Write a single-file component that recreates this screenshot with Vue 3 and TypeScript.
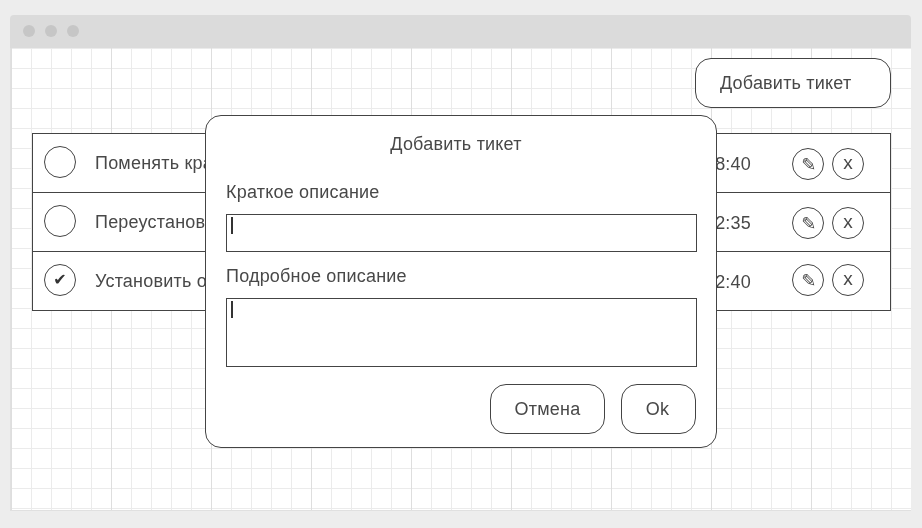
<script setup lang="ts">
interface Ticket {
  id: number
  title: string
  time: string
  done: boolean
}

const tickets: Ticket[] = [
  { id: 1, title: 'Поменять краску в принтере', time: '12.10.2017 18:40', done: false },
  { id: 2, title: 'Переустановить систему', time: '11.10.2017 12:35', done: false },
  { id: 3, title: 'Установить ос', time: '10.10.2017 12:40', done: true },
]
</script>

<template>
  <div class="page">
    <div class="window">
      <div class="titlebar">
        <span class="dot"></span>
        <span class="dot"></span>
        <span class="dot"></span>
      </div>
      <div class="canvas">
        <div class="toolbar">
          <button class="btn add">Добавить тикет</button>
        </div>
        <div class="table">
          <div v-for="t in tickets" :key="t.id" class="row">
            <span class="circle check">{{ t.done ? '✔' : '' }}</span>
            <span class="title">{{ t.title }}</span>
            <span class="time">{{ t.time }}</span>
            <span class="circle action pencil">✎</span>
            <span class="circle action cross">x</span>
          </div>
        </div>
        <div class="modal">
          <div class="modal-title">Добавить тикет</div>
          <div class="label first">Краткое описание</div>
          <div class="field short"><span class="caret"></span></div>
          <div class="label second">Подробное описание</div>
          <div class="field long"><span class="caret"></span></div>
          <div class="actions">
            <button class="btn cancel">Отмена</button>
            <button class="btn ok">Ok</button>
          </div>
        </div>
      </div>
    </div>
  </div>
</template>

<style>
html,
body {
  margin: 0;
  background: #ededed;
}
</style>

<style scoped>
.page {
  width: 922px;
  height: 528px;
  box-sizing: border-box;
  padding: 15px 11px 17px 10px;
  background: #ededed;
  font-family: "Liberation Sans", Arial, sans-serif;
  font-size: 18px;
  letter-spacing: 0.2px;
  color: #484848;
  overflow: hidden;
}
.window {
  height: 100%;
  display: flex;
  flex-direction: column;
  border-radius: 4px 4px 0 0;
  overflow: hidden;
}
.titlebar {
  box-sizing: border-box;
  height: 33px;
  flex: none;
  display: flex;
  align-items: center;
  gap: 10px;
  padding: 0 0 1px 13px;
  background: #dbdbdb;
}
.dot {
  width: 12px;
  height: 12px;
  border-radius: 50%;
  background: #c6c6c6;
}
.canvas {
  position: relative;
  flex: 1;
  box-sizing: border-box;
  padding: 10px 20px 0 21px;
  border-left: 1px solid #e0e0e0;
  border-bottom: 1px solid #e0e0e0;
  background-color: #fff;
  background-image:
    linear-gradient(to right, #dedede 1px, transparent 1px),
    linear-gradient(to right, #ebebeb 1px, transparent 1px),
    linear-gradient(to bottom, #ebebeb 1px, transparent 1px);
  background-size: 100px 100%, 20px 20px, 20px 20px;
  background-position: 1px 0, 1px 0, 0 0;
  background-origin: border-box;
  filter: grayscale(1);
}
.toolbar {
  display: flex;
  justify-content: flex-end;
}
.btn {
  box-sizing: border-box;
  height: 50px;
  border: 1px solid #444;
  border-radius: 16px;
  background: #fff;
  font: inherit;
  letter-spacing: inherit;
  color: inherit;
  padding: 0;
}
.add {
  width: 196px;
  text-align: left;
  padding-left: 24px;
}
.table {
  margin-top: 25px;
  border: 1px solid #444;
  background: #fff;
}
.row {
  box-sizing: border-box;
  height: 59px;
  display: flex;
  align-items: center;
  padding: 0 26px 0 11px;
  border-bottom: 1px solid #444;
}
.row:last-child {
  height: 58px;
  border-bottom: 0;
}
.circle {
  box-sizing: border-box;
  flex: none;
  width: 32px;
  height: 32px;
  border: 1px solid #444;
  border-radius: 50%;
  display: flex;
  align-items: center;
  justify-content: center;
}
.check {
  margin-bottom: 2px;
  padding-bottom: 2px;
  font-family: "DejaVu Sans", sans-serif;
  font-size: 16px;
  color: #333;
}
.title {
  flex: 1;
  margin-left: 19px;
  white-space: nowrap;
}
.time {
  padding-top: 3px;
  margin-right: 33px;
}
.action {
  margin-left: 8px;
  margin-top: 2px;
}
.row:last-child .action {
  margin-top: -2px;
}
.pencil {
  padding-left: 2px;
  font-family: "DejaVu Sans", sans-serif;
  font-size: 18px;
}
.cross {
  font-size: 19px;
  line-height: 1;
  padding-bottom: 3px;
}
.modal {
  position: absolute;
  left: 194px;
  top: 67px;
  box-sizing: border-box;
  width: 512px;
  height: 333px;
  padding: 0 19px 0 20px;
  border: 1px solid #444;
  border-radius: 16px;
  background: #fff;
}
.modal-title {
  margin-top: 18px;
  padding-right: 11px;
  line-height: 20px;
  text-align: center;
}
.label {
  line-height: 20px;
}
.first {
  margin-top: 28px;
}
.second {
  margin-top: 14px;
}
.field {
  box-sizing: border-box;
  border: 1px solid #444;
  background: #fff;
  padding: 2px 4px;
}
.short {
  height: 38px;
  margin-top: 12px;
}
.long {
  height: 69px;
  margin-top: 12px;
}
.caret {
  display: block;
  width: 2px;
  height: 17px;
  background: #333;
}
.actions {
  display: flex;
  justify-content: flex-end;
  gap: 16px;
  margin-top: 17px;
  padding-right: 1px;
}
.cancel {
  width: 115px;
}
.ok {
  width: 75px;
  padding-right: 2px;
}
</style>
